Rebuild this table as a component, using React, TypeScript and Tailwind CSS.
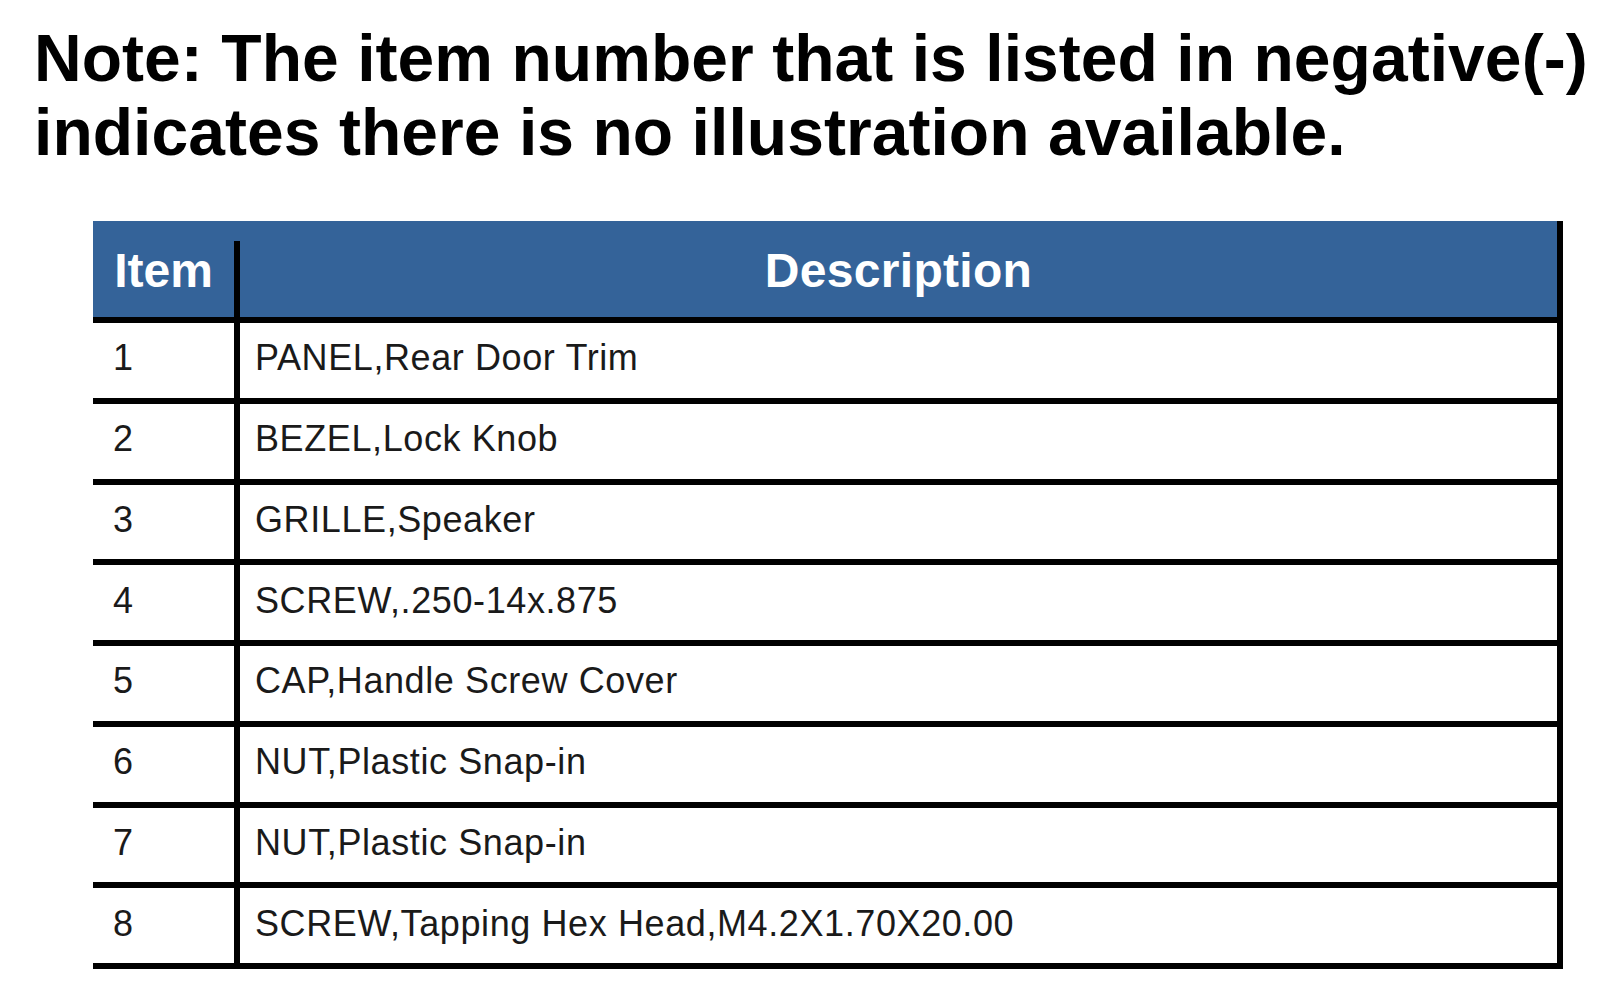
const rows = [
  { item: '1', desc: 'PANEL,Rear Door Trim' },
  { item: '2', desc: 'BEZEL,Lock Knob' },
  { item: '3', desc: 'GRILLE,Speaker' },
  { item: '4', desc: 'SCREW,.250-14x.875' },
  { item: '5', desc: 'CAP,Handle Screw Cover' },
  { item: '6', desc: 'NUT,Plastic Snap-in' },
  { item: '7', desc: 'NUT,Plastic Snap-in' },
  { item: '8', desc: 'SCREW,Tapping Hex Head,M4.2X1.70X20.00' },
];

export default function App() {
  return (
    <div className="min-h-screen bg-white font-['Liberation_Sans',Arial,sans-serif] text-black">
      <h1 className="pl-[34px] pt-[21px] text-[66px] leading-[74px] font-bold whitespace-nowrap tracking-[0.05px]">
        Note: The item number that is listed in negative(-)
        <br />
        indicates there is no illustration available.
      </h1>

      <div className="ml-[93px] mt-[52px] w-[1470px] border-r-[6px] border-black">
        {/* header */}
        <div className="flex h-[96px] bg-[#346399] text-white text-[48px] font-bold">
          <div className="w-[141px] flex items-center justify-center pt-1">Item</div>
          <div className="w-[6px] mt-[20px] bg-black" />
          <div className="flex-1 flex items-center justify-center pt-1 tracking-[0.3px]">Description</div>
        </div>
        <div className="h-[6px] bg-black" />

        {rows.map(r => (
          <div key={r.item} className="flex h-[80.75px] border-b-[6px] border-black text-[36px] tracking-[0.6px] text-[#1a1a1a]">
            <div className="w-[147px] border-r-[6px] border-black pl-[20px] pb-1 flex items-center">{r.item}</div>
            <div className="flex-1 pl-[15px] pb-1 flex items-center">{r.desc}</div>
          </div>
        ))}
      </div>
    </div>
  );
}
